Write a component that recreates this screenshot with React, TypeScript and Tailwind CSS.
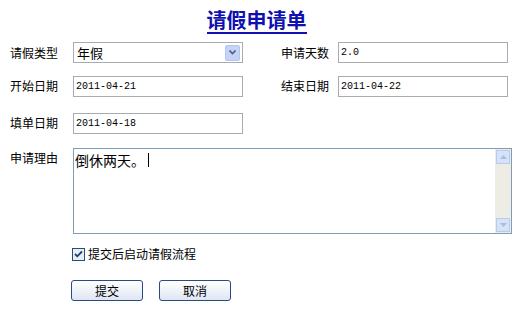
import React from "react";

const cjk = { fontFamily: '"Noto Sans CJK SC", "Liberation Sans", sans-serif' };
const mono = { fontFamily: '"Liberation Mono", "Noto Sans CJK SC", monospace' };

function Label({ children }: { children: React.ReactNode }) {
  return (
    <div className="w-[63px] shrink-0 text-[12px] leading-[14px] text-black" style={cjk}>
      {children}
    </div>
  );
}

function TextBox({ value }: { value: string }) {
  return (
    <div
      className="w-[170px] h-[21px] border border-[#a5acb5] bg-white flex items-center pl-[2px] text-[10px] text-black"
      style={mono}
    >
      {value}
    </div>
  );
}

export default function App() {
  return (
    <div className="w-[527px] h-[318px] bg-white relative overflow-hidden" style={cjk}>
      <div className="flex justify-center pt-[8px] pr-[14px]">
        <div
          className="text-[20px] leading-[24px] font-bold text-[#1010b0] border-b-2 border-[#1010b0]"
          style={{ fontFamily: '"Noto Sans CJK SC", serif' }}
        >
          请假申请单
        </div>
      </div>

      <div className="pl-[10px] mt-[8px] flex flex-col">
        <div className="flex items-center h-[21px]">
          <Label>请假类型</Label>
          <div className="w-[170px] h-[21px] border border-[#a5acb5] bg-white flex items-center justify-between pl-[3px] pr-[2px]">
            <span className="text-[13px]" style={cjk}>年假</span>
            <div className="w-[15px] h-[16px] bg-[#c5d3f6] border border-[#b4c5ee] rounded-[2px] flex items-center justify-center">
              <svg width="7" height="5" viewBox="0 0 7 5">
                <path d="M0.5 0.5 L3.5 3.5 L6.5 0.5" stroke="#4d6185" strokeWidth="1.6" fill="none" />
              </svg>
            </div>
          </div>
          <div className="w-[38px]" />
          <div className="w-[57px] text-[12px] leading-[14px]" style={cjk}>申请天数</div>
          <TextBox value="2.0" />
        </div>

        <div className="flex items-center h-[22px] mt-[12px]">
          <Label>开始日期</Label>
          <TextBox value="2011-04-21" />
          <div className="w-[38px]" />
          <div className="w-[57px] text-[12px] leading-[14px]" style={cjk}>结束日期</div>
          <TextBox value="2011-04-22" />
        </div>

        <div className="flex items-center h-[20px] mt-[16px]">
          <Label>填单日期</Label>
          <TextBox value="2011-04-18" />
        </div>

        <div className="flex items-start mt-[15px]">
          <div className="pt-[3px]">
            <Label>申请理由</Label>
          </div>
          <div className="w-[439px] h-[86px] border border-[#7f9db9] bg-white flex">
            <div className="flex-1 pl-[1px] pt-[1px] text-[14px] leading-[18px] flex items-center h-[20px]" style={cjk}>
              倒休两天。<span className="inline-block w-[1px] h-[14px] bg-black ml-[3px]" />
            </div>
            <div className="w-[16px] h-full bg-[#eeede5] flex flex-col justify-between p-[1px]">
              <div className="h-[14px] bg-[#d5e2f7] border border-[#b9cbec] flex items-center justify-center">
                <svg width="7" height="4" viewBox="0 0 7 4"><path d="M0 4 L3.5 0 L7 4Z" fill="#a8bde0" /></svg>
              </div>
              <div className="h-[14px] bg-[#d5e2f7] border border-[#b9cbec] flex items-center justify-center">
                <svg width="7" height="4" viewBox="0 0 7 4"><path d="M0 0 L3.5 4 L7 0Z" fill="#a8bde0" /></svg>
              </div>
            </div>
          </div>
        </div>

        <div className="flex items-center mt-[13px] pl-[62px]">
          <div className="w-[13px] h-[13px] border border-[#1c5180] bg-[#e9eef5] flex items-center justify-center">
            <svg width="9" height="8" viewBox="0 0 9 8">
              <path d="M1 4 L3.3 6.3 L8 1.5" stroke="#1f3f6f" strokeWidth="1.8" fill="none" />
            </svg>
          </div>
          <span className="ml-[3px] text-[12px] leading-[14px]" style={cjk}>提交后启动请假流程</span>
        </div>

        <div className="flex items-center mt-[19px] pl-[61px] gap-[16px]">
          <button
            className="w-[72px] h-[21px] border border-[#2a4a84] rounded-[3px] bg-gradient-to-b from-white to-[#dfe6f3] text-[12px] leading-[14px] text-black"
            style={cjk}
          >
            提交
          </button>
          <button
            className="w-[72px] h-[21px] border border-[#2a4a84] rounded-[3px] bg-gradient-to-b from-white to-[#dfe6f3] text-[12px] leading-[14px] text-black"
            style={cjk}
          >
            取消
          </button>
        </div>
      </div>
    </div>
  );
}
